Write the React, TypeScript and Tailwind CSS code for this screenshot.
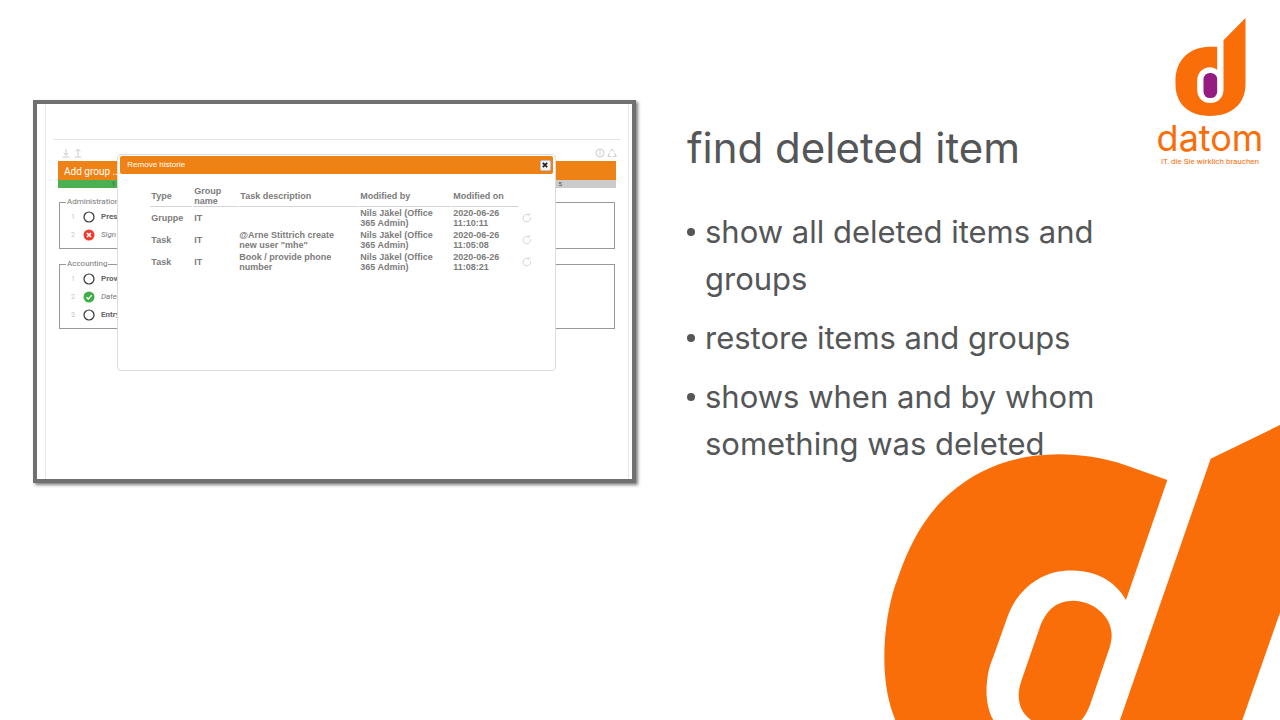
import type { ReactNode } from "react";
import { clsx } from "clsx";

type Status = "open" | "failed" | "done";

type Task = { label: string; status: Status };

type Group = { name: string; tasks: Task[] };

type Removed = {
  type: string;
  group: string;
  description: string;
  by: string;
  on: string;
};

const GROUPS: Group[] = [
  {
    name: "Administration",
    tasks: [
      { label: "Prese", status: "open" },
      { label: "Sign p", status: "failed" },
    ],
  },
  {
    name: "Accounting",
    tasks: [
      { label: "Prov", status: "open" },
      { label: "Date", status: "done" },
      { label: "Entry", status: "open" },
    ],
  },
];

const REMOVED: Removed[] = [
  { type: "Gruppe", group: "IT", description: "", by: "Nils Jäkel (Office 365 Admin)", on: "2020-06-26 11:10:11" },
  { type: "Task", group: "IT", description: '@Arne Stittrich create new user "mhe"', by: "Nils Jäkel (Office 365 Admin)", on: "2020-06-26 11:05:08" },
  { type: "Task", group: "IT", description: "Book / provide phone number", by: "Nils Jäkel (Office 365 Admin)", on: "2020-06-26 11:08:21" },
];

const COLUMNS = [
  { label: "Type", width: "w-[42px]" },
  { label: "Group name", width: "w-[45px]" },
  { label: "Task description", width: "w-[119px]" },
  { label: "Modified by", width: "w-[92px]" },
  { label: "Modified on", width: "w-[66px]" },
];

const POINTS = [
  "show all deleted items and groups",
  "restore items and groups",
  "shows when and by whom something was deleted",
];

function StatusIcon({ status }: { status: Status }) {
  return (
    <svg viewBox="0 0 12 12" className="size-3" fill="none" aria-hidden="true">
      {status === "open" && <circle cx="6" cy="6" r="5" stroke="#333" strokeWidth="1.2" />}
      {status === "failed" && (
        <>
          <circle cx="6" cy="6" r="5.5" fill="#f03a30" />
          <path d="M4 4l4 4M8 4l-4 4" stroke="#fff" strokeWidth="1.7" />
        </>
      )}
      {status === "done" && (
        <>
          <circle cx="6" cy="6" r="5.5" fill="#3fae49" />
          <path d="M3.4 6.2l1.8 1.8 3.5-3.7" stroke="#fff" strokeWidth="1.3" />
        </>
      )}
    </svg>
  );
}

function ToolButton({ label, children }: { label: string; children: ReactNode }) {
  return (
    <button type="button" aria-label={label} className="size-[10px]">
      <svg viewBox="0 0 10 10" className="size-[10px]" fill="none" stroke="#c4c4c4" strokeWidth="0.9">
        {children}
      </svg>
    </button>
  );
}

function GroupBox({ group }: { group: Group }) {
  return (
    <fieldset className="border border-[#999] pb-1 pl-[11px]">
      <legend className="-ml-[5px] px-px text-[8px] leading-[12px] text-[#777]">{group.name}</legend>
      <ol>
        {group.tasks.map((task, i) => (
          <li key={task.label} className="flex h-[18px] items-center text-[8px]">
            <span className="w-3 text-[7px] text-[#c4c4c4]">{i + 1}</span>
            <button type="button" aria-label={`${task.label}: ${task.status}`} className="mr-[6px]">
              <StatusIcon status={task.status} />
            </button>
            <span className={task.status === "open" ? "font-bold text-[#666]" : "italic text-[#777]"}>
              {task.label}
            </span>
          </li>
        ))}
      </ol>
    </fieldset>
  );
}

function Checklist() {
  return (
    <div className="ml-2 mr-[3px] flex-1 border-x border-[#e6e6e6] pt-[35px] font-['Roboto',sans-serif]">
      <div className="mx-2 border-t border-[#e2e2e2]" />
      <div className="mx-3 pt-2">
        <div className="flex justify-between px-[3px] pb-[3px]">
          <div className="flex gap-[2px]">
            <ToolButton label="Import">
              <path d="M5 1v6M2.8 5L5 7.2 7.2 5M1.5 9h7" />
            </ToolButton>
            <ToolButton label="Export">
              <path d="M5 8V1.5M2.8 3.5L5 1.3l2.2 2.2M1.8 9h6.4" />
            </ToolButton>
          </div>
          <div className="-mr-1 flex gap-[2px]">
            <ToolButton label="Information">
              <circle cx="5" cy="5" r="4" />
              <path d="M5 4.4V7.3M5 2.6v1" />
            </ToolButton>
            <ToolButton label="Deleted items">
              <path d="M3.2 3.6L5 1.2l1.8 2.4M7.6 5l1.6 3.4H6M4.2 8.4H.9L2.5 5" />
            </ToolButton>
          </div>
        </div>
        <button type="button" className="block h-[19px] w-full bg-[#ef8214] pl-[6px] text-left text-[10px] leading-[21px] text-white">
          Add group ...
        </button>
        <ol className="mb-2 grid h-2 grid-cols-5 text-center text-[6px] leading-[8px] text-[#444]">
          {[1, 2, 3, 4, 5].map((step) => (
            <li key={step} className={step === 1 ? "bg-[#4caf50]" : "bg-[#cbcbcb]"}>
              {step}
            </li>
          ))}
        </ol>
        <div className="mx-px flex flex-col gap-[9px]">
          {GROUPS.map((group) => (
            <GroupBox key={group.name} group={group} />
          ))}
        </div>
      </div>
    </div>
  );
}

function HistoryDialog() {
  return (
    <div
      role="dialog"
      aria-labelledby="history-title"
      className="absolute left-[13.5%] top-[50px] flex h-[217px] w-[73.7%] flex-col rounded-sm border border-[#dcdcdc] bg-white p-px font-['Liberation_Sans',Arial,sans-serif]"
    >
      <div className="mx-px flex h-[18px] items-center justify-between rounded-xs bg-[#ef8214] pl-[7px] pr-[2px]">
        <h2 id="history-title" className="text-[8px] text-white">
          Remove historie
        </h2>
        <button
          type="button"
          aria-label="Close"
          className="grid size-[11px] place-items-center rounded-xs border border-[#b9c3dc] bg-[#f3f3f3]"
        >
          <svg viewBox="0 0 6 6" className="size-[6px]" stroke="#222" strokeWidth="1.7">
            <path d="M.8.8l4.4 4.4M5.2.8L.8 5.2" />
          </svg>
        </button>
      </div>
      <table className="ml-[30px] mt-3 w-[388px] table-fixed border-separate border-spacing-x-px border-spacing-y-0 text-left text-[9px] font-bold leading-[10px] text-[#7c7c7c]">
        <thead>
          <tr>
            {COLUMNS.map((column) => (
              <th key={column.label} className={clsx("h-[21px] border-b border-[#d4d4d4] p-0 pl-px align-middle", column.width)}>
                {column.label}
              </th>
            ))}
            <td />
          </tr>
        </thead>
        <tbody>
          {REMOVED.map((row) => (
            <tr key={row.on}>
              <td className="h-[22px] pl-px">{row.type}</td>
              <td className="pl-px">{row.group}</td>
              <td className="pr-5">{row.description}</td>
              <td className="pl-px pr-4">{row.by}</td>
              <td className="pl-px">{row.on}</td>
              <td className="pl-[3px]">
                <button type="button" aria-label="Restore" className="block">
                  <svg viewBox="0 0 10 10" className="size-[10px]" fill="none" stroke="#cfcfcf" strokeWidth="0.9">
                    <path d="M8.5 4.2A3.8 3.8 0 1 1 6.4 1.6M8.6 1H6.2v2.4" />
                  </svg>
                </button>
              </td>
            </tr>
          ))}
        </tbody>
      </table>
    </div>
  );
}

function Logo() {
  return (
    <div className="flex flex-col items-center text-[#fa6e0a]">
      <svg viewBox="75 23 212 294" className="h-[98px] w-[71px]" role="img" aria-label="datom">
        <path
          fill="#fa6e0a"
          d="M201 109H178C118 109 76 150 76 210V222C76 280 115 317 180 317S286 280 286 222V23L220 90V238C220 262 202 278 180 278S141 262 141 238V212C141 188 158 171 180 171C188 171 195 174 201 179Z"
        />
        <rect x="160" y="188" width="41" height="75" rx="19" fill="#951b81" />
      </svg>
      <p className="mt-[2px] font-['Inter',sans-serif] text-[36px] leading-[40px]">datom</p>
      <p className="whitespace-nowrap font-['Roboto',sans-serif] text-[8px] leading-[8px]">
        IT. die Sie wirklich brauchen
      </p>
    </div>
  );
}

function CornerMark() {
  return (
    <svg viewBox="0 0 1230 900" className="pointer-events-none absolute bottom-0 right-0 h-[300px] w-[410px]" fill="#fa6e0a" aria-hidden="true">
      <path d="M892 180L765 135C700 113 630 103 565 103C430 104 325 146 240 220C165 285 120 370 85 470C55 545 42 640 43 720C44 790 55 850 76 900H370C350 865 347 820 351 785C355 750 360 735 370 710L412 592C430 540 460 505 500 480C540 455 580 450 620 452C690 456 740 490 768 540Z" />
      <path d="M610 542C665 542 725 585 725 645C725 665 720 680 714 697L660 855C652 875 645 888 634 900H483C460 883 446 860 446 825C446 810 450 795 455 780L510 620C530 568 560 543 610 542Z" />
      <path d="M1230 15L1022 116L750 900H1117L1230 578Z" />
    </svg>
  );
}

export default function App() {
  return (
    <main className="relative flex min-h-screen items-start overflow-hidden bg-white pl-[33px] pr-[17px]">
      <section
        aria-label="Checklist preview"
        className="relative mt-[100px] flex min-h-[383px] w-[603px] shrink basis-[603px] border-4 border-[#707070] bg-white shadow-[2px_2px_3px_rgba(0,0,0,0.5)]"
      >
        <Checklist />
        <HistoryDialog />
      </section>
      <section className="ml-[51px] min-w-0 flex-1 pt-[120px] font-['Inter',sans-serif] text-[#545658]">
        <h1 className="text-[42px] leading-[56px]">find deleted item</h1>
        <ul className="mt-8 flex flex-col gap-3 text-[31px] leading-[47px]">
          {POINTS.map((point) => (
            <li key={point} className="flex">
              <span className="flex h-[47px] w-[18px] shrink-0 items-center" aria-hidden="true">
                <span className="size-2 rounded-full bg-[#545658]" />
              </span>
              <span>{point}</span>
            </li>
          ))}
        </ul>
      </section>
      <div className="w-[106px] shrink-0 pt-[18px]">
        <Logo />
      </div>
      <CornerMark />
    </main>
  );
}
